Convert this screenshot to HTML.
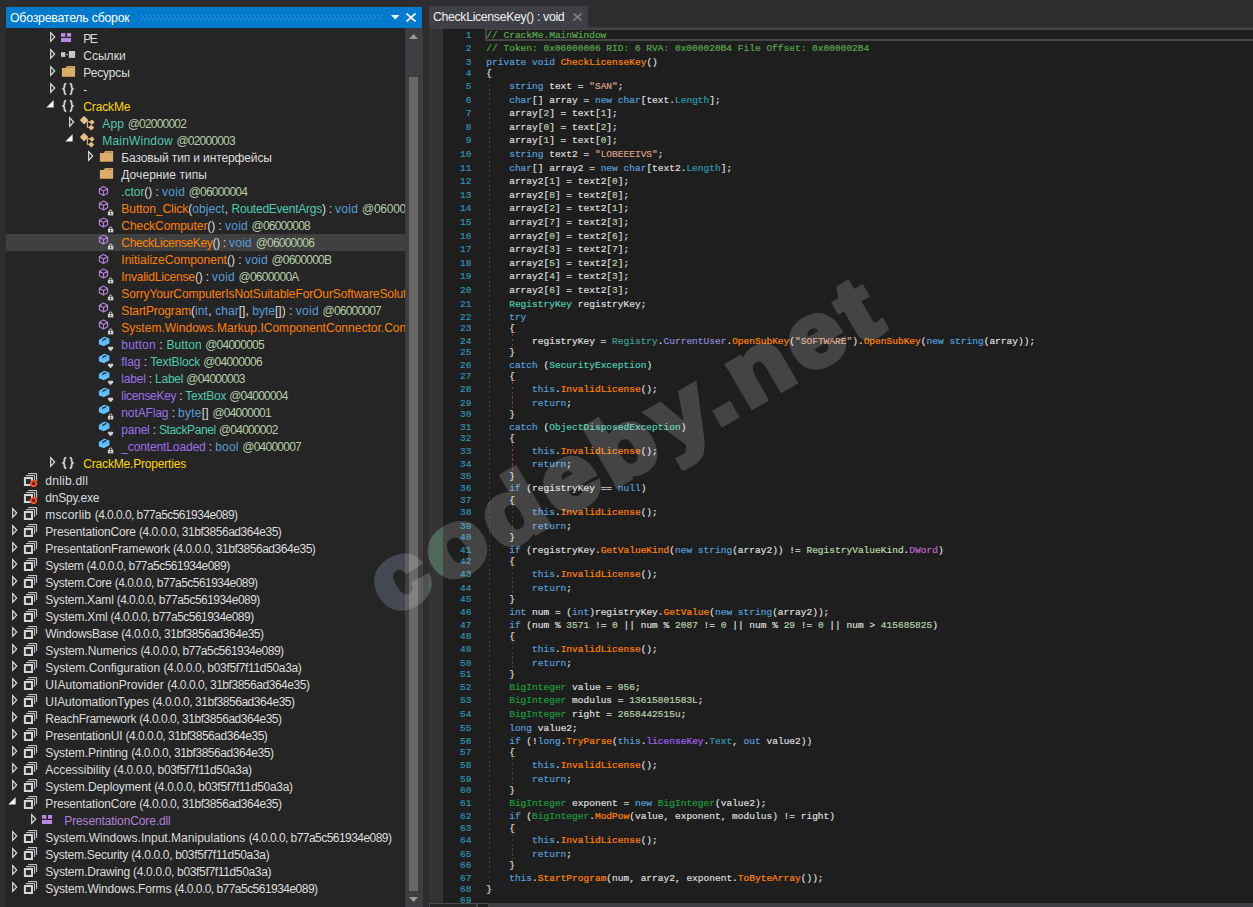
<!DOCTYPE html>
<html><head><meta charset="utf-8"><title>dnSpy</title>
<style>
html,body{margin:0;padding:0}
body{width:1253px;height:907px;overflow:hidden;background:#2d2d30;position:relative;font-family:"Liberation Sans",sans-serif;}
.abs{position:absolute}
#title{left:6px;top:7px;width:416px;height:21px;background:#007acc}
#title .tt{position:absolute;left:4px;top:4px;letter-spacing:-0.216px;font-size:12.300px;color:#fff;white-space:nowrap;line-height:15px}
#grip{position:absolute;left:135px;top:8px;width:242px;height:5px;
 background-image:radial-gradient(circle at 0.5px 0.5px,#59a8de 0.600px,transparent 0.700px),radial-gradient(circle at 0.5px 0.5px,#59a8de 0.600px,transparent 0.700px);
 background-size:4px 4px,4px 4px;background-position:0 0,2px 2px}
#tree{left:6px;top:28px;width:399px;height:879px;background:#252526;overflow:hidden}
.row{position:absolute;left:0;height:17px;width:399px;white-space:nowrap}
.row.sel{background:#404040}
.row .tx{position:absolute;top:1px;height:17px;line-height:17px;font-size:12px;white-space:pre}
.row .ic{position:absolute;top:0}
.row .ex{position:absolute}
.row svg{display:block}
#vsb{left:405px;top:28px;width:18px;height:879px;background:#3e3e42}
#vsb .th{position:absolute;left:4px;top:49px;width:9px;height:814px;background:#686868}
#tab{left:429px;top:6px;width:159px;height:21px;background:#3f3f46}
#tab .tt{position:absolute;left:4px;top:4px;letter-spacing:-0.340px;font-size:12.300px;color:#f1f1f1;white-space:nowrap;line-height:15px}
#tabline{left:429px;top:27px;width:824px;height:2px;background:#3f3f46}
#ed{left:429px;top:29px;width:824px;height:874px;background:#1e1e1e;overflow:hidden}
#gut{left:0;top:0;width:14px;height:874px;background:#333333}
.ln,.cl{position:absolute;font-family:"Liberation Mono",monospace;font-size:9.500px;line-height:12px;height:12px;white-space:pre;letter-spacing:0.015px}
.ln,.cl{-webkit-text-stroke:0.220px currentColor}
.ln{left:0;width:42.400px;text-align:right;color:#2b91af}
.cl{left:57.300px;color:#dcdcdc}
#cur{left:56px;top:0px;width:780px;height:9.000px;border:2px solid #464646;border-top-width:1.500px}
.g{position:absolute;width:1px}
#hsb{left:429px;top:903px;width:824px;height:4px;background:#3e3e42}
.wm{top:0;height:907px;overflow:hidden;pointer-events:none}
.wm span{position:absolute;top:540.800px;font-family:"Liberation Sans",sans-serif;font-weight:bold;font-size:90px;line-height:90px;color:#fff;opacity:0.190;
 -webkit-text-stroke:6px #fff;transform-origin:0 76.200px;transform:rotate(-30.150deg) scaleX(1.100);white-space:nowrap;letter-spacing:6.000px}

.Tw{color:#dcdcdc}
.Tns{color:#ffd700}
.Tt{color:#4ec9b0}
.Tk{color:#569cd6}
.Tm{color:#ff8000}
.Tf{color:#9b6fe8}
.Tn{color:#b5cea8}
.Tmod{color:#b180d7}
.Cl{color:#dcdcdc}
.Cc{color:#57a64a}
.Ck{color:#569cd6}
.Cm{color:#ff8000}
.Ct{color:#4ec9b0}
.Cst{color:#3f9f90}
.Csp{color:#8a8ad8}
.Cip{color:#2a9aae}
.Cf{color:#a060f0}
.Cs{color:#d69d85}
.Cn{color:#b5cea8}
.Cvt{color:#1a9c3c}
.Ce{color:#b8d7a3}
.Cef{color:#bd63c5}
</style></head><body>
<div id="title" class="abs"><div class="tt">Обозреватель сборок</div><div id="grip"></div>
<svg class="abs" style="left:385px;top:8px" width="9" height="5" viewBox="0 0 9 5"><path d="M0 0h8.500l-4.250 4.500z" fill="#fff"/></svg>
<svg class="abs" style="left:400px;top:6px" width="10" height="9" viewBox="0 0 10 9"><path d="M.5 .5l9 8M9.500 .5l-9 8" stroke="#fff" stroke-width="1.600"/></svg>
</div>
<div id="tree" class="abs">
<div class="row" style="top:2px">
<span class="ex" style="left:43.2px;top:1.200px"><svg width="8" height="12" viewBox="0 0 8 12"><path d="M1.700 1.700l4 4.300-4 4.300z" fill="none" stroke="#e4e4e4" stroke-width="1.150"/></svg></span>
<span class="ic" style="left:54px;top:0px"><svg width="22" height="17" viewBox="0 0 22 17" style="overflow:visible"><rect x="1" y="3" width="4.400" height="3.800" fill="#b888e0"/><rect x="7" y="3" width="4.100" height="3.800" fill="#b888e0"/><rect x="1" y="8" width="10.100" height="4" fill="#b888e0"/></svg></span>
<span class="tx" id="r0_0" style="left:77.3px;letter-spacing:-1.600px"><span class="Tw">PE</span></span>
</div>
<div class="row" style="top:19px">
<span class="ex" style="left:43.2px;top:1.200px"><svg width="8" height="12" viewBox="0 0 8 12"><path d="M1.700 1.700l4 4.300-4 4.300z" fill="none" stroke="#e4e4e4" stroke-width="1.150"/></svg></span>
<span class="ic" style="left:54px;top:0px"><svg width="22" height="17" viewBox="0 0 22 17" style="overflow:visible"><rect x="1" y="5.200" width="4.300" height="4.700" fill="#c8c8c8"/><rect x="6.200" y="7.100" width="1.700" height="1" fill="#c8c8c8"/><rect x="8.900" y="4" width="6.200" height="6.900" fill="#c8c8c8"/></svg></span>
<span class="tx" id="r1_0" style="left:77.3px;letter-spacing:0.009px"><span class="Tw">Ссылки</span></span>
</div>
<div class="row" style="top:36px">
<span class="ex" style="left:43.2px;top:1.200px"><svg width="8" height="12" viewBox="0 0 8 12"><path d="M1.700 1.700l4 4.300-4 4.300z" fill="none" stroke="#e4e4e4" stroke-width="1.150"/></svg></span>
<span class="ic" style="left:54px;top:0px"><svg width="22" height="17" viewBox="0 0 22 17" style="overflow:visible"><path d="M1.900 3.900h3.600l1.600-2h8v10.900h-13.200z" fill="#dcac6c"/><path d="M7.400 3.250h6.600" stroke="#8f6f42" stroke-width="0.700"/></svg></span>
<span class="tx" id="r2_0" style="left:77.3px;letter-spacing:-0.132px"><span class="Tw">Ресурсы</span></span>
</div>
<div class="row" style="top:53px">
<span class="ex" style="left:43.2px;top:1.200px"><svg width="8" height="12" viewBox="0 0 8 12"><path d="M1.700 1.700l4 4.300-4 4.300z" fill="none" stroke="#e4e4e4" stroke-width="1.150"/></svg></span>
<span class="ic" style="left:54px;top:0px"><svg width="22" height="17" viewBox="0 0 22 17" style="overflow:visible"><path d="M6.300 2.600c-1.700 0-1.800 .6-1.800 2.200 0 1.700-.2 2.600-1.100 3.100 .9 .5 1.100 1.400 1.100 3.100 0 1.600 .1 2.200 1.800 2.200M9.700 2.600c1.700 0 1.800 .6 1.800 2.200 0 1.700 .2 2.600 1.100 3.100-.9 .5-1.100 1.400-1.100 3.100 0 1.600-.1 2.200-1.800 2.200" fill="none" stroke="#d0d0d0" stroke-width="1.900"/></svg></span>
<span class="tx" id="r3_0" style="left:77.3px;letter-spacing:-0.255px"><span class="Tw">-</span></span>
</div>
<div class="row" style="top:70px">
<span class="ex" style="left:40.0px;top:2.000px"><svg width="8" height="8" viewBox="0 0 8 8"><path d="M7.600 .3v7.300h-7.300z" fill="#f4f4f4"/></svg></span>
<span class="ic" style="left:54px;top:0px"><svg width="22" height="17" viewBox="0 0 22 17" style="overflow:visible"><path d="M6.300 2.600c-1.700 0-1.800 .6-1.800 2.200 0 1.700-.2 2.600-1.100 3.100 .9 .5 1.100 1.400 1.100 3.100 0 1.600 .1 2.200 1.800 2.200M9.700 2.600c1.700 0 1.800 .6 1.800 2.200 0 1.700 .2 2.600 1.100 3.100-.9 .5-1.100 1.400-1.100 3.100 0 1.600-.1 2.200-1.800 2.200" fill="none" stroke="#d0d0d0" stroke-width="1.900"/></svg></span>
<span class="tx" id="r4_0" style="left:77.3px;letter-spacing:-0.130px"><span class="Tns">CrackMe</span></span>
</div>
<div class="row" style="top:87px">
<span class="ex" style="left:62.2px;top:1.200px"><svg width="8" height="12" viewBox="0 0 8 12"><path d="M1.700 1.700l4 4.300-4 4.300z" fill="none" stroke="#e4e4e4" stroke-width="1.150"/></svg></span>
<span class="ic" style="left:73px;top:0px"><svg width="22" height="17" viewBox="0 0 22 17" style="overflow:visible"><rect x="1.99" y="1.99" width="6.22" height="6.22" rx="1.0" transform="rotate(45 5.10 5.10)" fill="#e5bd85"/><rect x="10.99" y="5.29" width="3.82" height="3.82" rx="0.5" transform="rotate(45 12.90 7.20)" fill="#e5bd85"/><rect x="10.25" y="10.55" width="4.10" height="4.10" rx="0.5" transform="rotate(45 12.30 12.60)" fill="#e5bd85"/><path d="M7.500 6.700h3.500M8.400 7v5.200h2.500" fill="none" stroke="#e5bd85" stroke-width="1.100"/></svg></span>
<span class="tx" id="r5_0" style="left:96.3px;letter-spacing:0.179px"><span class="Tt">App </span></span>
<span class="tx" id="r5_1" style="left:121.7px;letter-spacing:-0.800px"><span class="Tn">@02000002</span></span>
</div>
<div class="row" style="top:104px">
<span class="ex" style="left:59.0px;top:2.000px"><svg width="8" height="8" viewBox="0 0 8 8"><path d="M7.600 .3v7.300h-7.300z" fill="#f4f4f4"/></svg></span>
<span class="ic" style="left:73px;top:0px"><svg width="22" height="17" viewBox="0 0 22 17" style="overflow:visible"><rect x="1.99" y="1.99" width="6.22" height="6.22" rx="1.0" transform="rotate(45 5.10 5.10)" fill="#e5bd85"/><rect x="10.99" y="5.29" width="3.82" height="3.82" rx="0.5" transform="rotate(45 12.90 7.20)" fill="#e5bd85"/><rect x="10.25" y="10.55" width="4.10" height="4.10" rx="0.5" transform="rotate(45 12.30 12.60)" fill="#e5bd85"/><path d="M7.500 6.700h3.500M8.400 7v5.200h2.500" fill="none" stroke="#e5bd85" stroke-width="1.100"/></svg></span>
<span class="tx" id="r6_0" style="left:96.3px;letter-spacing:0.188px"><span class="Tt">MainWindow </span></span>
<span class="tx" id="r6_1" style="left:170.4px;letter-spacing:-0.800px"><span class="Tn">@02000003</span></span>
</div>
<div class="row" style="top:121px">
<span class="ex" style="left:81.2px;top:1.200px"><svg width="8" height="12" viewBox="0 0 8 12"><path d="M1.700 1.700l4 4.300-4 4.300z" fill="none" stroke="#e4e4e4" stroke-width="1.150"/></svg></span>
<span class="ic" style="left:92px;top:0px"><svg width="22" height="17" viewBox="0 0 22 17" style="overflow:visible"><path d="M1.900 3.900h3.600l1.600-2h8v10.900h-13.200z" fill="#dcac6c"/><path d="M7.400 3.250h6.600" stroke="#8f6f42" stroke-width="0.700"/></svg></span>
<span class="tx" id="r7_0" style="left:115.3px;letter-spacing:-0.124px"><span class="Tw">Базовый тип и интерфейсы</span></span>
</div>
<div class="row" style="top:138px">
<span class="ic" style="left:92px;top:0px"><svg width="22" height="17" viewBox="0 0 22 17" style="overflow:visible"><path d="M1.900 3.900h3.600l1.600-2h8v10.900h-13.200z" fill="#dcac6c"/><path d="M7.400 3.250h6.600" stroke="#8f6f42" stroke-width="0.700"/></svg></span>
<span class="tx" id="r8_0" style="left:115.3px;letter-spacing:0.059px"><span class="Tw">Дочерние типы</span></span>
</div>
<div class="row" style="top:155px">
<span class="ic" style="left:92px;top:0px"><svg width="22" height="17" viewBox="0 0 22 17" style="overflow:visible"><g transform="translate(0 2.3)"><path d="M5.500 1.100l4.100 2.250v4.500l-4.100 2.250-4.100-2.250v-4.500z M1.400 3.350l4.100 2.250 4.100-2.250M5.500 5.600v4.500" fill="none" stroke="#b180d7" stroke-width="1.150" stroke-linejoin="round"/></g></svg></span>
<span class="tx" id="r9_0" style="left:115.3px;letter-spacing:-0.064px"><span class="Tt">.ctor</span><span class="Tw">() : </span></span>
<span class="tx" id="r9_1" style="left:156.0px;letter-spacing:0.268px"><span class="Tk">void </span></span>
<span class="tx" id="r9_2" style="left:182.7px;letter-spacing:-0.800px"><span class="Tn">@06000004</span></span>
</div>
<div class="row" style="top:172px">
<span class="ic" style="left:92px;top:0px"><svg width="22" height="17" viewBox="0 0 22 17" style="overflow:visible"><g transform="translate(0 0.0)"><path d="M5.500 1.100l4.100 2.250v4.500l-4.100 2.250-4.100-2.250v-4.500z M1.400 3.350l4.100 2.250 4.100-2.250M5.500 5.600v4.500" fill="none" stroke="#b180d7" stroke-width="1.150" stroke-linejoin="round"/></g><g><rect x="9.900" y="11.800" width="5.400" height="3.600" fill="#d0d0d0"/><path d="M11.300 11.800v-.6a1.300 1.300 0 0 1 2.600 0v.6" fill="none" stroke="#d0d0d0" stroke-width="1"/><rect x="12.100" y="12.800" width="1" height="1.500" fill="#252526"/></g></svg></span>
<span class="tx" id="r10_0" style="left:115.3px;letter-spacing:-0.036px"><span class="Tm">Button_Click</span><span class="Tw">(</span></span>
<span class="tx" id="r10_1" style="left:186.2px;letter-spacing:0.089px"><span class="Tk">object</span><span class="Tw">, </span></span>
<span class="tx" id="r10_2" style="left:225.6px;letter-spacing:-0.245px"><span class="Tt">RoutedEventArgs</span><span class="Tw">) : </span></span>
<span class="tx" id="r10_3" style="left:329.0px;letter-spacing:0.328px"><span class="Tk">void </span></span>
<span class="tx" id="r10_4" style="left:356.0px;letter-spacing:-0.255px"><span class="Tn">@06000009</span></span>
</div>
<div class="row" style="top:189px">
<span class="ic" style="left:92px;top:0px"><svg width="22" height="17" viewBox="0 0 22 17" style="overflow:visible"><g transform="translate(0 0.0)"><path d="M5.500 1.100l4.100 2.250v4.500l-4.100 2.250-4.100-2.250v-4.500z M1.400 3.350l4.100 2.250 4.100-2.250M5.500 5.600v4.500" fill="none" stroke="#b180d7" stroke-width="1.150" stroke-linejoin="round"/></g><g><rect x="9.900" y="11.800" width="5.400" height="3.600" fill="#d0d0d0"/><path d="M11.300 11.800v-.6a1.300 1.300 0 0 1 2.600 0v.6" fill="none" stroke="#d0d0d0" stroke-width="1"/><rect x="12.100" y="12.800" width="1" height="1.500" fill="#252526"/></g></svg></span>
<span class="tx" id="r11_0" style="left:115.3px;letter-spacing:-0.050px"><span class="Tm">CheckComputer</span><span class="Tw">() : </span></span>
<span class="tx" id="r11_1" style="left:219.1px;letter-spacing:0.209px"><span class="Tk">void </span></span>
<span class="tx" id="r11_2" style="left:245.5px;letter-spacing:-0.798px"><span class="Tn">@06000008</span></span>
</div>
<div class="row sel" style="top:206px">
<span class="ic" style="left:92px;top:0px"><svg width="22" height="17" viewBox="0 0 22 17" style="overflow:visible"><g transform="translate(0 0.0)"><path d="M5.500 1.100l4.100 2.250v4.500l-4.100 2.250-4.100-2.250v-4.500z M1.400 3.350l4.100 2.250 4.100-2.250M5.500 5.600v4.500" fill="none" stroke="#b180d7" stroke-width="1.150" stroke-linejoin="round"/></g><g><rect x="9.900" y="11.800" width="5.400" height="3.600" fill="#d0d0d0"/><path d="M11.300 11.800v-.6a1.300 1.300 0 0 1 2.600 0v.6" fill="none" stroke="#d0d0d0" stroke-width="1"/><rect x="12.100" y="12.800" width="1" height="1.500" fill="#252526"/></g></svg></span>
<span class="tx" id="r12_0" style="left:115.3px;letter-spacing:-0.323px"><span class="Tm">CheckLicenseKey</span><span class="Tw">() : </span></span>
<span class="tx" id="r12_1" style="left:222.9px;letter-spacing:0.290px"><span class="Tk">void </span></span>
<span class="tx" id="r12_2" style="left:249.7px;letter-spacing:-0.800px"><span class="Tn">@06000006</span></span>
</div>
<div class="row" style="top:223px">
<span class="ic" style="left:92px;top:0px"><svg width="22" height="17" viewBox="0 0 22 17" style="overflow:visible"><g transform="translate(0 2.3)"><path d="M5.500 1.100l4.100 2.250v4.500l-4.100 2.250-4.100-2.250v-4.500z M1.400 3.350l4.100 2.250 4.100-2.250M5.500 5.600v4.500" fill="none" stroke="#b180d7" stroke-width="1.150" stroke-linejoin="round"/></g></svg></span>
<span class="tx" id="r13_0" style="left:115.3px;letter-spacing:0.012px"><span class="Tm">InitializeComponent</span><span class="Tw">() : </span></span>
<span class="tx" id="r13_1" style="left:239.0px;letter-spacing:0.208px"><span class="Tk">void </span></span>
<span class="tx" id="r13_2" style="left:265.4px;letter-spacing:-0.800px"><span class="Tn">@0600000B</span></span>
</div>
<div class="row" style="top:240px">
<span class="ic" style="left:92px;top:0px"><svg width="22" height="17" viewBox="0 0 22 17" style="overflow:visible"><g transform="translate(0 0.0)"><path d="M5.500 1.100l4.100 2.250v4.500l-4.100 2.250-4.100-2.250v-4.500z M1.400 3.350l4.100 2.250 4.100-2.250M5.500 5.600v4.500" fill="none" stroke="#b180d7" stroke-width="1.150" stroke-linejoin="round"/></g><g><rect x="9.900" y="11.800" width="5.400" height="3.600" fill="#d0d0d0"/><path d="M11.300 11.800v-.6a1.300 1.300 0 0 1 2.600 0v.6" fill="none" stroke="#d0d0d0" stroke-width="1"/><rect x="12.100" y="12.800" width="1" height="1.500" fill="#252526"/></g></svg></span>
<span class="tx" id="r14_0" style="left:115.3px;letter-spacing:-0.177px"><span class="Tm">InvalidLicense</span><span class="Tw">() : </span></span>
<span class="tx" id="r14_1" style="left:206.0px;letter-spacing:0.228px"><span class="Tk">void </span></span>
<span class="tx" id="r14_2" style="left:232.5px;letter-spacing:-0.756px"><span class="Tn">@0600000A</span></span>
</div>
<div class="row" style="top:257px">
<span class="ic" style="left:92px;top:0px"><svg width="22" height="17" viewBox="0 0 22 17" style="overflow:visible"><g transform="translate(0 0.0)"><path d="M5.500 1.100l4.100 2.250v4.500l-4.100 2.250-4.100-2.250v-4.500z M1.400 3.350l4.100 2.250 4.100-2.250M5.500 5.600v4.500" fill="none" stroke="#b180d7" stroke-width="1.150" stroke-linejoin="round"/></g><g><rect x="9.900" y="11.800" width="5.400" height="3.600" fill="#d0d0d0"/><path d="M11.300 11.800v-.6a1.300 1.300 0 0 1 2.600 0v.6" fill="none" stroke="#d0d0d0" stroke-width="1"/><rect x="12.100" y="12.800" width="1" height="1.500" fill="#252526"/></g></svg></span>
<span class="tx" id="r15_0" style="left:115.3px;letter-spacing:-0.096px"><span class="Tm">SorryYourComputerIsNotSuitableForOurSoftwareSolution</span></span>
<span class="tx" id="r15_1" style="left:416.0px;letter-spacing:-0.255px"><span class="Tw">() : </span><span class="Tk">void </span><span class="Tn">@06000005</span></span>
</div>
<div class="row" style="top:274px">
<span class="ic" style="left:92px;top:0px"><svg width="22" height="17" viewBox="0 0 22 17" style="overflow:visible"><g transform="translate(0 0.0)"><path d="M5.500 1.100l4.100 2.250v4.500l-4.100 2.250-4.100-2.250v-4.500z M1.400 3.350l4.100 2.250 4.100-2.250M5.500 5.600v4.500" fill="none" stroke="#b180d7" stroke-width="1.150" stroke-linejoin="round"/></g><g><rect x="9.900" y="11.800" width="5.400" height="3.600" fill="#d0d0d0"/><path d="M11.300 11.800v-.6a1.300 1.300 0 0 1 2.600 0v.6" fill="none" stroke="#d0d0d0" stroke-width="1"/><rect x="12.100" y="12.800" width="1" height="1.500" fill="#252526"/></g></svg></span>
<span class="tx" id="r16_0" style="left:115.3px;letter-spacing:-0.135px"><span class="Tm">StartProgram</span><span class="Tw">(</span></span>
<span class="tx" id="r16_1" style="left:188.9px;letter-spacing:0.190px"><span class="Tk">int</span><span class="Tw">, </span></span>
<span class="tx" id="r16_2" style="left:209.2px;letter-spacing:0.041px"><span class="Tk">char</span><span class="Tw">[], </span></span>
<span class="tx" id="r16_3" style="left:246.2px;letter-spacing:0.025px"><span class="Tk">byte</span><span class="Tw">[]) : </span></span>
<span class="tx" id="r16_4" style="left:289.8px;letter-spacing:0.289px"><span class="Tk">void </span></span>
<span class="tx" id="r16_5" style="left:316.6px;letter-spacing:-0.797px"><span class="Tn">@06000007</span></span>
</div>
<div class="row" style="top:291px">
<span class="ic" style="left:92px;top:0px"><svg width="22" height="17" viewBox="0 0 22 17" style="overflow:visible"><g transform="translate(0 0.0)"><path d="M5.500 1.100l4.100 2.250v4.500l-4.100 2.250-4.100-2.250v-4.500z M1.400 3.350l4.100 2.250 4.100-2.250M5.500 5.600v4.500" fill="none" stroke="#b180d7" stroke-width="1.150" stroke-linejoin="round"/></g><g><rect x="9.900" y="11.800" width="5.400" height="3.600" fill="#d0d0d0"/><path d="M11.300 11.800v-.6a1.300 1.300 0 0 1 2.600 0v.6" fill="none" stroke="#d0d0d0" stroke-width="1"/><rect x="12.100" y="12.800" width="1" height="1.500" fill="#252526"/></g></svg></span>
<span class="tx" id="r17_0" style="left:115.3px;letter-spacing:0.018px"><span class="Tm">System.Windows.Markup.IComponentConnector.Connect</span></span>
<span class="tx" id="r17_1" style="left:423.0px;letter-spacing:-0.255px"><span class="Tw">(</span><span class="Tk">int</span><span class="Tw">, </span><span class="Tk">object</span><span class="Tw">) : </span><span class="Tk">void </span><span class="Tn">@0600000C</span></span>
</div>
<div class="row" style="top:308px">
<span class="ic" style="left:92px;top:0px"><svg width="22" height="17" viewBox="0 0 22 17" style="overflow:visible"><path d="M1.500 4.300l5-2.900 4.300 1.700v3.900l-5 2.500-4.300-1.700z" fill="#66c1fb" stroke="#66c1fb" stroke-width="1.300" stroke-linejoin="round"/><path d="M1.300 4.500l4.400 1.800 5.300-3" fill="none" stroke="#4aa5e0" stroke-width="0.600"/><path d="M4.900 4.200l2.900-1.500" stroke="#122a40" stroke-width="1.300" stroke-linecap="round"/><path d="M12.600 15.300l-2.500-2.600a1.400 1.400 0 0 1 2.500-1.500a1.400 1.400 0 0 1 2.500 1.500z" fill="#d0d0d0"/></svg></span>
<span class="tx" id="r18_0" style="left:115.3px;letter-spacing:0.190px"><span class="Tf">button</span><span class="Tw"> : </span></span>
<span class="tx" id="r18_1" style="left:160.4px;letter-spacing:0.111px"><span class="Tt">Button </span></span>
<span class="tx" id="r18_2" style="left:199.2px;letter-spacing:-0.763px"><span class="Tn">@04000005</span></span>
</div>
<div class="row" style="top:325px">
<span class="ic" style="left:92px;top:0px"><svg width="22" height="17" viewBox="0 0 22 17" style="overflow:visible"><path d="M1.500 4.300l5-2.900 4.300 1.700v3.900l-5 2.500-4.300-1.700z" fill="#66c1fb" stroke="#66c1fb" stroke-width="1.300" stroke-linejoin="round"/><path d="M1.300 4.500l4.400 1.800 5.300-3" fill="none" stroke="#4aa5e0" stroke-width="0.600"/><path d="M4.900 4.200l2.900-1.500" stroke="#122a40" stroke-width="1.300" stroke-linecap="round"/><path d="M12.600 15.300l-2.500-2.600a1.400 1.400 0 0 1 2.500-1.500a1.400 1.400 0 0 1 2.500 1.500z" fill="#d0d0d0"/></svg></span>
<span class="tx" id="r19_0" style="left:115.3px;letter-spacing:-0.053px"><span class="Tf">flag</span><span class="Tw"> : </span></span>
<span class="tx" id="r19_1" style="left:144.3px;letter-spacing:-0.178px"><span class="Tt">TextBlock </span></span>
<span class="tx" id="r19_2" style="left:197.2px;letter-spacing:-0.774px"><span class="Tn">@04000006</span></span>
</div>
<div class="row" style="top:342px">
<span class="ic" style="left:92px;top:0px"><svg width="22" height="17" viewBox="0 0 22 17" style="overflow:visible"><path d="M1.500 4.300l5-2.900 4.300 1.700v3.900l-5 2.500-4.300-1.700z" fill="#66c1fb" stroke="#66c1fb" stroke-width="1.300" stroke-linejoin="round"/><path d="M1.300 4.500l4.400 1.800 5.300-3" fill="none" stroke="#4aa5e0" stroke-width="0.600"/><path d="M4.900 4.200l2.900-1.500" stroke="#122a40" stroke-width="1.300" stroke-linecap="round"/><path d="M12.600 15.300l-2.500-2.600a1.400 1.400 0 0 1 2.500-1.500a1.400 1.400 0 0 1 2.500 1.500z" fill="#d0d0d0"/></svg></span>
<span class="tx" id="r20_0" style="left:115.3px;letter-spacing:-0.196px"><span class="Tf">label</span><span class="Tw"> : </span></span>
<span class="tx" id="r20_1" style="left:149.1px;letter-spacing:-0.249px"><span class="Tt">Label </span></span>
<span class="tx" id="r20_2" style="left:180.3px;letter-spacing:-0.797px"><span class="Tn">@04000003</span></span>
</div>
<div class="row" style="top:359px">
<span class="ic" style="left:92px;top:0px"><svg width="22" height="17" viewBox="0 0 22 17" style="overflow:visible"><path d="M1.500 4.300l5-2.900 4.300 1.700v3.900l-5 2.500-4.300-1.700z" fill="#66c1fb" stroke="#66c1fb" stroke-width="1.300" stroke-linejoin="round"/><path d="M1.300 4.500l4.400 1.800 5.300-3" fill="none" stroke="#4aa5e0" stroke-width="0.600"/><path d="M4.900 4.200l2.900-1.500" stroke="#122a40" stroke-width="1.300" stroke-linecap="round"/><path d="M12.600 15.300l-2.500-2.600a1.400 1.400 0 0 1 2.500-1.500a1.400 1.400 0 0 1 2.500 1.500z" fill="#d0d0d0"/></svg></span>
<span class="tx" id="r21_0" style="left:115.3px;letter-spacing:-0.311px"><span class="Tf">licenseKey</span><span class="Tw"> : </span></span>
<span class="tx" id="r21_1" style="left:179.3px;letter-spacing:-0.266px"><span class="Tt">TextBox </span></span>
<span class="tx" id="r21_2" style="left:223.2px;letter-spacing:-0.796px"><span class="Tn">@04000004</span></span>
</div>
<div class="row" style="top:376px">
<span class="ic" style="left:92px;top:0px"><svg width="22" height="17" viewBox="0 0 22 17" style="overflow:visible"><path d="M1.500 4.300l5-2.900 4.300 1.700v3.900l-5 2.500-4.300-1.700z" fill="#66c1fb" stroke="#66c1fb" stroke-width="1.300" stroke-linejoin="round"/><path d="M1.300 4.500l4.400 1.800 5.300-3" fill="none" stroke="#4aa5e0" stroke-width="0.600"/><path d="M4.900 4.200l2.900-1.500" stroke="#122a40" stroke-width="1.300" stroke-linecap="round"/><g><rect x="9.900" y="11.800" width="5.400" height="3.600" fill="#d0d0d0"/><path d="M11.300 11.800v-.6a1.300 1.300 0 0 1 2.600 0v.6" fill="none" stroke="#d0d0d0" stroke-width="1"/><rect x="12.100" y="12.800" width="1" height="1.500" fill="#252526"/></g></svg></span>
<span class="tx" id="r22_0" style="left:115.3px;letter-spacing:-0.113px"><span class="Tf">notAFlag</span><span class="Tw"> : </span></span>
<span class="tx" id="r22_1" style="left:172.1px;letter-spacing:0.229px"><span class="Tk">byte</span><span class="Tw">[] </span></span>
<span class="tx" id="r22_2" style="left:206.4px;letter-spacing:-0.800px"><span class="Tn">@04000001</span></span>
</div>
<div class="row" style="top:393px">
<span class="ic" style="left:92px;top:0px"><svg width="22" height="17" viewBox="0 0 22 17" style="overflow:visible"><path d="M1.500 4.300l5-2.900 4.300 1.700v3.900l-5 2.500-4.300-1.700z" fill="#66c1fb" stroke="#66c1fb" stroke-width="1.300" stroke-linejoin="round"/><path d="M1.300 4.500l4.400 1.800 5.300-3" fill="none" stroke="#4aa5e0" stroke-width="0.600"/><path d="M4.900 4.200l2.900-1.500" stroke="#122a40" stroke-width="1.300" stroke-linecap="round"/><path d="M12.600 15.300l-2.500-2.600a1.400 1.400 0 0 1 2.500-1.500a1.400 1.400 0 0 1 2.500 1.500z" fill="#d0d0d0"/></svg></span>
<span class="tx" id="r23_0" style="left:115.3px;letter-spacing:-0.223px"><span class="Tf">panel</span><span class="Tw"> : </span></span>
<span class="tx" id="r23_1" style="left:152.9px;letter-spacing:-0.367px"><span class="Tt">StackPanel </span></span>
<span class="tx" id="r23_2" style="left:212.9px;letter-spacing:-0.763px"><span class="Tn">@04000002</span></span>
</div>
<div class="row" style="top:410px">
<span class="ic" style="left:92px;top:0px"><svg width="22" height="17" viewBox="0 0 22 17" style="overflow:visible"><path d="M1.500 4.300l5-2.900 4.300 1.700v3.900l-5 2.500-4.300-1.700z" fill="#66c1fb" stroke="#66c1fb" stroke-width="1.300" stroke-linejoin="round"/><path d="M1.300 4.500l4.400 1.800 5.300-3" fill="none" stroke="#4aa5e0" stroke-width="0.600"/><path d="M4.900 4.200l2.900-1.500" stroke="#122a40" stroke-width="1.300" stroke-linecap="round"/><g><rect x="9.900" y="11.800" width="5.400" height="3.600" fill="#d0d0d0"/><path d="M11.300 11.800v-.6a1.300 1.300 0 0 1 2.600 0v.6" fill="none" stroke="#d0d0d0" stroke-width="1"/><rect x="12.100" y="12.800" width="1" height="1.500" fill="#252526"/></g></svg></span>
<span class="tx" id="r24_0" style="left:115.3px;letter-spacing:-0.130px"><span class="Tf">_contentLoaded</span><span class="Tw"> : </span></span>
<span class="tx" id="r24_1" style="left:209.2px;letter-spacing:0.216px"><span class="Tk">bool </span></span>
<span class="tx" id="r24_2" style="left:236.3px;letter-spacing:-0.764px"><span class="Tn">@04000007</span></span>
</div>
<div class="row" style="top:427px">
<span class="ex" style="left:43.2px;top:1.200px"><svg width="8" height="12" viewBox="0 0 8 12"><path d="M1.700 1.700l4 4.300-4 4.300z" fill="none" stroke="#e4e4e4" stroke-width="1.150"/></svg></span>
<span class="ic" style="left:54px;top:0px"><svg width="22" height="17" viewBox="0 0 22 17" style="overflow:visible"><path d="M6.300 2.600c-1.700 0-1.800 .6-1.800 2.200 0 1.700-.2 2.600-1.100 3.100 .9 .5 1.100 1.400 1.100 3.100 0 1.600 .1 2.200 1.800 2.200M9.700 2.600c1.700 0 1.800 .6 1.800 2.200 0 1.700 .2 2.600 1.100 3.100-.9 .5-1.100 1.400-1.100 3.100 0 1.600-.1 2.200-1.800 2.200" fill="none" stroke="#d0d0d0" stroke-width="1.900"/></svg></span>
<span class="tx" id="r25_0" style="left:77.3px;letter-spacing:-0.185px"><span class="Tns">CrackMe.Properties</span></span>
</div>
<div class="row" style="top:444px">
<span class="ic" style="left:16px;top:0px"><svg width="22" height="17" viewBox="0 0 22 17" style="overflow:visible"><path d="M6.100 1.600h8.500v7.300" fill="none" stroke="#d6d6d6" stroke-width="1"/><path d="M4 3.600h8.600v7.300" fill="none" stroke="#d6d6d6" stroke-width="1"/><rect x="2.900" y="6" width="7.100" height="7" fill="#2a2a2d" stroke="#d6d6d6" stroke-width="2"/><path d="M10.100 7.900h3l2.100 2.100v3l-2.100 2.100h-3l-2.100-2.100v-3z" fill="#f4511e"/><path d="M10.300 10.200l2.600 2.600M12.900 10.200l-2.600 2.600" stroke="#3a1408" stroke-width="1.100"/></svg></span>
<span class="tx" id="r26_0" style="left:39.3px;letter-spacing:0.244px"><span class="Tw">dnlib.dll</span></span>
</div>
<div class="row" style="top:461px">
<span class="ic" style="left:16px;top:0px"><svg width="22" height="17" viewBox="0 0 22 17" style="overflow:visible"><path d="M6.100 1.600h8.500v7.300" fill="none" stroke="#d6d6d6" stroke-width="1"/><path d="M4 3.600h8.600v7.300" fill="none" stroke="#d6d6d6" stroke-width="1"/><rect x="2.900" y="6" width="7.100" height="7" fill="#2a2a2d" stroke="#d6d6d6" stroke-width="2"/><path d="M10.100 7.900h3l2.100 2.100v3l-2.100 2.100h-3l-2.100-2.100v-3z" fill="#f4511e"/><path d="M10.300 10.200l2.600 2.600M12.900 10.200l-2.600 2.600" stroke="#3a1408" stroke-width="1.100"/></svg></span>
<span class="tx" id="r27_0" style="left:39.3px;letter-spacing:-0.214px"><span class="Tw">dnSpy.exe</span></span>
</div>
<div class="row" style="top:478px">
<span class="ex" style="left:5.2px;top:1.200px"><svg width="8" height="12" viewBox="0 0 8 12"><path d="M1.700 1.700l4 4.300-4 4.300z" fill="none" stroke="#e4e4e4" stroke-width="1.150"/></svg></span>
<span class="ic" style="left:16px;top:0px"><svg width="22" height="17" viewBox="0 0 22 17" style="overflow:visible"><path d="M6.100 1.600h8.500v7.300" fill="none" stroke="#d6d6d6" stroke-width="1"/><path d="M4 3.600h8.600v7.300" fill="none" stroke="#d6d6d6" stroke-width="1"/><rect x="2.900" y="6" width="7.100" height="7" fill="#2a2a2d" stroke="#d6d6d6" stroke-width="2"/></svg></span>
<span class="tx" id="r28_0" style="left:39.3px;letter-spacing:0.154px"><span class="Tw">mscorlib </span></span>
<span class="tx" id="r28_1" style="left:88.7px;letter-spacing:-0.543px"><span class="Tw">(4.0.0.0, b77a5c561934e089)</span></span>
</div>
<div class="row" style="top:495px">
<span class="ex" style="left:5.2px;top:1.200px"><svg width="8" height="12" viewBox="0 0 8 12"><path d="M1.700 1.700l4 4.300-4 4.300z" fill="none" stroke="#e4e4e4" stroke-width="1.150"/></svg></span>
<span class="ic" style="left:16px;top:0px"><svg width="22" height="17" viewBox="0 0 22 17" style="overflow:visible"><path d="M6.100 1.600h8.500v7.300" fill="none" stroke="#d6d6d6" stroke-width="1"/><path d="M4 3.600h8.600v7.300" fill="none" stroke="#d6d6d6" stroke-width="1"/><rect x="2.900" y="6" width="7.100" height="7" fill="#2a2a2d" stroke="#d6d6d6" stroke-width="2"/></svg></span>
<span class="tx" id="r29_0" style="left:39.3px;letter-spacing:-0.178px"><span class="Tw">PresentationCore </span></span>
<span class="tx" id="r29_1" style="left:133.0px;letter-spacing:-0.460px"><span class="Tw">(4.0.0.0, 31bf3856ad364e35)</span></span>
</div>
<div class="row" style="top:512px">
<span class="ex" style="left:5.2px;top:1.200px"><svg width="8" height="12" viewBox="0 0 8 12"><path d="M1.700 1.700l4 4.300-4 4.300z" fill="none" stroke="#e4e4e4" stroke-width="1.150"/></svg></span>
<span class="ic" style="left:16px;top:0px"><svg width="22" height="17" viewBox="0 0 22 17" style="overflow:visible"><path d="M6.100 1.600h8.500v7.300" fill="none" stroke="#d6d6d6" stroke-width="1"/><path d="M4 3.600h8.600v7.300" fill="none" stroke="#d6d6d6" stroke-width="1"/><rect x="2.900" y="6" width="7.100" height="7" fill="#2a2a2d" stroke="#d6d6d6" stroke-width="2"/></svg></span>
<span class="tx" id="r30_0" style="left:39.3px;letter-spacing:-0.137px"><span class="Tw">PresentationFramework </span></span>
<span class="tx" id="r30_1" style="left:167.0px;letter-spacing:-0.460px"><span class="Tw">(4.0.0.0, 31bf3856ad364e35)</span></span>
</div>
<div class="row" style="top:529px">
<span class="ex" style="left:5.2px;top:1.200px"><svg width="8" height="12" viewBox="0 0 8 12"><path d="M1.700 1.700l4 4.300-4 4.300z" fill="none" stroke="#e4e4e4" stroke-width="1.150"/></svg></span>
<span class="ic" style="left:16px;top:0px"><svg width="22" height="17" viewBox="0 0 22 17" style="overflow:visible"><path d="M6.100 1.600h8.500v7.300" fill="none" stroke="#d6d6d6" stroke-width="1"/><path d="M4 3.600h8.600v7.300" fill="none" stroke="#d6d6d6" stroke-width="1"/><rect x="2.900" y="6" width="7.100" height="7" fill="#2a2a2d" stroke="#d6d6d6" stroke-width="2"/></svg></span>
<span class="tx" id="r31_0" style="left:39.3px;letter-spacing:-0.306px"><span class="Tw">System </span></span>
<span class="tx" id="r31_1" style="left:80.5px;letter-spacing:-0.532px"><span class="Tw">(4.0.0.0, b77a5c561934e089)</span></span>
</div>
<div class="row" style="top:546px">
<span class="ex" style="left:5.2px;top:1.200px"><svg width="8" height="12" viewBox="0 0 8 12"><path d="M1.700 1.700l4 4.300-4 4.300z" fill="none" stroke="#e4e4e4" stroke-width="1.150"/></svg></span>
<span class="ic" style="left:16px;top:0px"><svg width="22" height="17" viewBox="0 0 22 17" style="overflow:visible"><path d="M6.100 1.600h8.500v7.300" fill="none" stroke="#d6d6d6" stroke-width="1"/><path d="M4 3.600h8.600v7.300" fill="none" stroke="#d6d6d6" stroke-width="1"/><rect x="2.900" y="6" width="7.100" height="7" fill="#2a2a2d" stroke="#d6d6d6" stroke-width="2"/></svg></span>
<span class="tx" id="r32_0" style="left:39.3px;letter-spacing:-0.265px"><span class="Tw">System.Core </span></span>
<span class="tx" id="r32_1" style="left:108.8px;letter-spacing:-0.547px"><span class="Tw">(4.0.0.0, b77a5c561934e089)</span></span>
</div>
<div class="row" style="top:563px">
<span class="ex" style="left:5.2px;top:1.200px"><svg width="8" height="12" viewBox="0 0 8 12"><path d="M1.700 1.700l4 4.300-4 4.300z" fill="none" stroke="#e4e4e4" stroke-width="1.150"/></svg></span>
<span class="ic" style="left:16px;top:0px"><svg width="22" height="17" viewBox="0 0 22 17" style="overflow:visible"><path d="M6.100 1.600h8.500v7.300" fill="none" stroke="#d6d6d6" stroke-width="1"/><path d="M4 3.600h8.600v7.300" fill="none" stroke="#d6d6d6" stroke-width="1"/><rect x="2.900" y="6" width="7.100" height="7" fill="#2a2a2d" stroke="#d6d6d6" stroke-width="2"/></svg></span>
<span class="tx" id="r33_0" style="left:39.3px;letter-spacing:-0.218px"><span class="Tw">System.Xaml </span></span>
<span class="tx" id="r33_1" style="left:110.7px;letter-spacing:-0.532px"><span class="Tw">(4.0.0.0, b77a5c561934e089)</span></span>
</div>
<div class="row" style="top:580px">
<span class="ex" style="left:5.2px;top:1.200px"><svg width="8" height="12" viewBox="0 0 8 12"><path d="M1.700 1.700l4 4.300-4 4.300z" fill="none" stroke="#e4e4e4" stroke-width="1.150"/></svg></span>
<span class="ic" style="left:16px;top:0px"><svg width="22" height="17" viewBox="0 0 22 17" style="overflow:visible"><path d="M6.100 1.600h8.500v7.300" fill="none" stroke="#d6d6d6" stroke-width="1"/><path d="M4 3.600h8.600v7.300" fill="none" stroke="#d6d6d6" stroke-width="1"/><rect x="2.900" y="6" width="7.100" height="7" fill="#2a2a2d" stroke="#d6d6d6" stroke-width="2"/></svg></span>
<span class="tx" id="r34_0" style="left:39.3px;letter-spacing:-0.186px"><span class="Tw">System.Xml </span></span>
<span class="tx" id="r34_1" style="left:104.6px;letter-spacing:-0.536px"><span class="Tw">(4.0.0.0, b77a5c561934e089)</span></span>
</div>
<div class="row" style="top:597px">
<span class="ex" style="left:5.2px;top:1.200px"><svg width="8" height="12" viewBox="0 0 8 12"><path d="M1.700 1.700l4 4.300-4 4.300z" fill="none" stroke="#e4e4e4" stroke-width="1.150"/></svg></span>
<span class="ic" style="left:16px;top:0px"><svg width="22" height="17" viewBox="0 0 22 17" style="overflow:visible"><path d="M6.100 1.600h8.500v7.300" fill="none" stroke="#d6d6d6" stroke-width="1"/><path d="M4 3.600h8.600v7.300" fill="none" stroke="#d6d6d6" stroke-width="1"/><rect x="2.900" y="6" width="7.100" height="7" fill="#2a2a2d" stroke="#d6d6d6" stroke-width="2"/></svg></span>
<span class="tx" id="r35_0" style="left:39.3px;letter-spacing:-0.281px"><span class="Tw">WindowsBase </span></span>
<span class="tx" id="r35_1" style="left:115.3px;letter-spacing:-0.463px"><span class="Tw">(4.0.0.0, 31bf3856ad364e35)</span></span>
</div>
<div class="row" style="top:614px">
<span class="ex" style="left:5.2px;top:1.200px"><svg width="8" height="12" viewBox="0 0 8 12"><path d="M1.700 1.700l4 4.300-4 4.300z" fill="none" stroke="#e4e4e4" stroke-width="1.150"/></svg></span>
<span class="ic" style="left:16px;top:0px"><svg width="22" height="17" viewBox="0 0 22 17" style="overflow:visible"><path d="M6.100 1.600h8.500v7.300" fill="none" stroke="#d6d6d6" stroke-width="1"/><path d="M4 3.600h8.600v7.300" fill="none" stroke="#d6d6d6" stroke-width="1"/><rect x="2.900" y="6" width="7.100" height="7" fill="#2a2a2d" stroke="#d6d6d6" stroke-width="2"/></svg></span>
<span class="tx" id="r36_0" style="left:39.3px;letter-spacing:-0.141px"><span class="Tw">System.Numerics </span></span>
<span class="tx" id="r36_1" style="left:134.4px;letter-spacing:-0.532px"><span class="Tw">(4.0.0.0, b77a5c561934e089)</span></span>
</div>
<div class="row" style="top:631px">
<span class="ex" style="left:5.2px;top:1.200px"><svg width="8" height="12" viewBox="0 0 8 12"><path d="M1.700 1.700l4 4.300-4 4.300z" fill="none" stroke="#e4e4e4" stroke-width="1.150"/></svg></span>
<span class="ic" style="left:16px;top:0px"><svg width="22" height="17" viewBox="0 0 22 17" style="overflow:visible"><path d="M6.100 1.600h8.500v7.300" fill="none" stroke="#d6d6d6" stroke-width="1"/><path d="M4 3.600h8.600v7.300" fill="none" stroke="#d6d6d6" stroke-width="1"/><rect x="2.900" y="6" width="7.100" height="7" fill="#2a2a2d" stroke="#d6d6d6" stroke-width="2"/></svg></span>
<span class="tx" id="r37_0" style="left:39.3px;letter-spacing:0.002px"><span class="Tw">System.Configuration </span></span>
<span class="tx" id="r37_1" style="left:157.4px;letter-spacing:-0.338px"><span class="Tw">(4.0.0.0, b03f5f7f11d50a3a)</span></span>
</div>
<div class="row" style="top:648px">
<span class="ex" style="left:5.2px;top:1.200px"><svg width="8" height="12" viewBox="0 0 8 12"><path d="M1.700 1.700l4 4.300-4 4.300z" fill="none" stroke="#e4e4e4" stroke-width="1.150"/></svg></span>
<span class="ic" style="left:16px;top:0px"><svg width="22" height="17" viewBox="0 0 22 17" style="overflow:visible"><path d="M6.100 1.600h8.500v7.300" fill="none" stroke="#d6d6d6" stroke-width="1"/><path d="M4 3.600h8.600v7.300" fill="none" stroke="#d6d6d6" stroke-width="1"/><rect x="2.900" y="6" width="7.100" height="7" fill="#2a2a2d" stroke="#d6d6d6" stroke-width="2"/></svg></span>
<span class="tx" id="r38_0" style="left:39.3px;letter-spacing:0.056px"><span class="Tw">UIAutomationProvider </span></span>
<span class="tx" id="r38_1" style="left:161.2px;letter-spacing:-0.463px"><span class="Tw">(4.0.0.0, 31bf3856ad364e35)</span></span>
</div>
<div class="row" style="top:665px">
<span class="ex" style="left:5.2px;top:1.200px"><svg width="8" height="12" viewBox="0 0 8 12"><path d="M1.700 1.700l4 4.300-4 4.300z" fill="none" stroke="#e4e4e4" stroke-width="1.150"/></svg></span>
<span class="ic" style="left:16px;top:0px"><svg width="22" height="17" viewBox="0 0 22 17" style="overflow:visible"><path d="M6.100 1.600h8.500v7.300" fill="none" stroke="#d6d6d6" stroke-width="1"/><path d="M4 3.600h8.600v7.300" fill="none" stroke="#d6d6d6" stroke-width="1"/><rect x="2.900" y="6" width="7.100" height="7" fill="#2a2a2d" stroke="#d6d6d6" stroke-width="2"/></svg></span>
<span class="tx" id="r39_0" style="left:39.3px;letter-spacing:-0.059px"><span class="Tw">UIAutomationTypes </span></span>
<span class="tx" id="r39_1" style="left:146.3px;letter-spacing:-0.463px"><span class="Tw">(4.0.0.0, 31bf3856ad364e35)</span></span>
</div>
<div class="row" style="top:682px">
<span class="ex" style="left:5.2px;top:1.200px"><svg width="8" height="12" viewBox="0 0 8 12"><path d="M1.700 1.700l4 4.300-4 4.300z" fill="none" stroke="#e4e4e4" stroke-width="1.150"/></svg></span>
<span class="ic" style="left:16px;top:0px"><svg width="22" height="17" viewBox="0 0 22 17" style="overflow:visible"><path d="M6.100 1.600h8.500v7.300" fill="none" stroke="#d6d6d6" stroke-width="1"/><path d="M4 3.600h8.600v7.300" fill="none" stroke="#d6d6d6" stroke-width="1"/><rect x="2.900" y="6" width="7.100" height="7" fill="#2a2a2d" stroke="#d6d6d6" stroke-width="2"/></svg></span>
<span class="tx" id="r40_0" style="left:39.3px;letter-spacing:-0.269px"><span class="Tw">ReachFramework </span></span>
<span class="tx" id="r40_1" style="left:133.3px;letter-spacing:-0.463px"><span class="Tw">(4.0.0.0, 31bf3856ad364e35)</span></span>
</div>
<div class="row" style="top:699px">
<span class="ex" style="left:5.2px;top:1.200px"><svg width="8" height="12" viewBox="0 0 8 12"><path d="M1.700 1.700l4 4.300-4 4.300z" fill="none" stroke="#e4e4e4" stroke-width="1.150"/></svg></span>
<span class="ic" style="left:16px;top:0px"><svg width="22" height="17" viewBox="0 0 22 17" style="overflow:visible"><path d="M6.100 1.600h8.500v7.300" fill="none" stroke="#d6d6d6" stroke-width="1"/><path d="M4 3.600h8.600v7.300" fill="none" stroke="#d6d6d6" stroke-width="1"/><rect x="2.900" y="6" width="7.100" height="7" fill="#2a2a2d" stroke="#d6d6d6" stroke-width="2"/></svg></span>
<span class="tx" id="r41_0" style="left:39.3px;letter-spacing:-0.168px"><span class="Tw">PresentationUI </span></span>
<span class="tx" id="r41_1" style="left:119.5px;letter-spacing:-0.478px"><span class="Tw">(4.0.0.0, 31bf3856ad364e35)</span></span>
</div>
<div class="row" style="top:716px">
<span class="ex" style="left:5.2px;top:1.200px"><svg width="8" height="12" viewBox="0 0 8 12"><path d="M1.700 1.700l4 4.300-4 4.300z" fill="none" stroke="#e4e4e4" stroke-width="1.150"/></svg></span>
<span class="ic" style="left:16px;top:0px"><svg width="22" height="17" viewBox="0 0 22 17" style="overflow:visible"><path d="M6.100 1.600h8.500v7.300" fill="none" stroke="#d6d6d6" stroke-width="1"/><path d="M4 3.600h8.600v7.300" fill="none" stroke="#d6d6d6" stroke-width="1"/><rect x="2.900" y="6" width="7.100" height="7" fill="#2a2a2d" stroke="#d6d6d6" stroke-width="2"/></svg></span>
<span class="tx" id="r42_0" style="left:39.3px;letter-spacing:-0.092px"><span class="Tw">System.Printing </span></span>
<span class="tx" id="r42_1" style="left:125.2px;letter-spacing:-0.463px"><span class="Tw">(4.0.0.0, 31bf3856ad364e35)</span></span>
</div>
<div class="row" style="top:733px">
<span class="ex" style="left:5.2px;top:1.200px"><svg width="8" height="12" viewBox="0 0 8 12"><path d="M1.700 1.700l4 4.300-4 4.300z" fill="none" stroke="#e4e4e4" stroke-width="1.150"/></svg></span>
<span class="ic" style="left:16px;top:0px"><svg width="22" height="17" viewBox="0 0 22 17" style="overflow:visible"><path d="M6.100 1.600h8.500v7.300" fill="none" stroke="#d6d6d6" stroke-width="1"/><path d="M4 3.600h8.600v7.300" fill="none" stroke="#d6d6d6" stroke-width="1"/><rect x="2.900" y="6" width="7.100" height="7" fill="#2a2a2d" stroke="#d6d6d6" stroke-width="2"/></svg></span>
<span class="tx" id="r43_0" style="left:39.3px;letter-spacing:-0.027px"><span class="Tw">Accessibility </span></span>
<span class="tx" id="r43_1" style="left:107.6px;letter-spacing:-0.338px"><span class="Tw">(4.0.0.0, b03f5f7f11d50a3a)</span></span>
</div>
<div class="row" style="top:750px">
<span class="ex" style="left:5.2px;top:1.200px"><svg width="8" height="12" viewBox="0 0 8 12"><path d="M1.700 1.700l4 4.300-4 4.300z" fill="none" stroke="#e4e4e4" stroke-width="1.150"/></svg></span>
<span class="ic" style="left:16px;top:0px"><svg width="22" height="17" viewBox="0 0 22 17" style="overflow:visible"><path d="M6.100 1.600h8.500v7.300" fill="none" stroke="#d6d6d6" stroke-width="1"/><path d="M4 3.600h8.600v7.300" fill="none" stroke="#d6d6d6" stroke-width="1"/><rect x="2.900" y="6" width="7.100" height="7" fill="#2a2a2d" stroke="#d6d6d6" stroke-width="2"/></svg></span>
<span class="tx" id="r44_0" style="left:39.3px;letter-spacing:-0.101px"><span class="Tw">System.Deployment </span></span>
<span class="tx" id="r44_1" style="left:148.2px;letter-spacing:-0.323px"><span class="Tw">(4.0.0.0, b03f5f7f11d50a3a)</span></span>
</div>
<div class="row" style="top:767px">
<span class="ex" style="left:2.0px;top:2.000px"><svg width="8" height="8" viewBox="0 0 8 8"><path d="M7.600 .3v7.300h-7.300z" fill="#f4f4f4"/></svg></span>
<span class="ic" style="left:16px;top:0px"><svg width="22" height="17" viewBox="0 0 22 17" style="overflow:visible"><path d="M6.100 1.600h8.500v7.300" fill="none" stroke="#d6d6d6" stroke-width="1"/><path d="M4 3.600h8.600v7.300" fill="none" stroke="#d6d6d6" stroke-width="1"/><rect x="2.900" y="6" width="7.100" height="7" fill="#2a2a2d" stroke="#d6d6d6" stroke-width="2"/></svg></span>
<span class="tx" id="r45_0" style="left:39.3px;letter-spacing:-0.161px"><span class="Tw">PresentationCore </span></span>
<span class="tx" id="r45_1" style="left:133.3px;letter-spacing:-0.463px"><span class="Tw">(4.0.0.0, 31bf3856ad364e35)</span></span>
</div>
<div class="row" style="top:784px">
<span class="ex" style="left:24.2px;top:1.200px"><svg width="8" height="12" viewBox="0 0 8 12"><path d="M1.700 1.700l4 4.300-4 4.300z" fill="none" stroke="#e4e4e4" stroke-width="1.150"/></svg></span>
<span class="ic" style="left:35px;top:0px"><svg width="22" height="17" viewBox="0 0 22 17" style="overflow:visible"><rect x="1" y="3" width="4.400" height="3.800" fill="#b888e0"/><rect x="7" y="3" width="4.100" height="3.800" fill="#b888e0"/><rect x="1" y="8" width="10.100" height="4" fill="#b888e0"/></svg></span>
<span class="tx" id="r46_0" style="left:58.3px;letter-spacing:-0.122px"><span class="Tmod">PresentationCore.dll</span></span>
</div>
<div class="row" style="top:801px">
<span class="ex" style="left:5.2px;top:1.200px"><svg width="8" height="12" viewBox="0 0 8 12"><path d="M1.700 1.700l4 4.300-4 4.300z" fill="none" stroke="#e4e4e4" stroke-width="1.150"/></svg></span>
<span class="ic" style="left:16px;top:0px"><svg width="22" height="17" viewBox="0 0 22 17" style="overflow:visible"><path d="M6.100 1.600h8.500v7.300" fill="none" stroke="#d6d6d6" stroke-width="1"/><path d="M4 3.600h8.600v7.300" fill="none" stroke="#d6d6d6" stroke-width="1"/><rect x="2.900" y="6" width="7.100" height="7" fill="#2a2a2d" stroke="#d6d6d6" stroke-width="2"/></svg></span>
<span class="tx" id="r47_0" style="left:39.3px;letter-spacing:0.018px"><span class="Tw">System.Windows.Input.Manipulations </span></span>
<span class="tx" id="r47_1" style="left:242.7px;letter-spacing:-0.547px"><span class="Tw">(4.0.0.0, b77a5c561934e089)</span></span>
</div>
<div class="row" style="top:818px">
<span class="ex" style="left:5.2px;top:1.200px"><svg width="8" height="12" viewBox="0 0 8 12"><path d="M1.700 1.700l4 4.300-4 4.300z" fill="none" stroke="#e4e4e4" stroke-width="1.150"/></svg></span>
<span class="ic" style="left:16px;top:0px"><svg width="22" height="17" viewBox="0 0 22 17" style="overflow:visible"><path d="M6.100 1.600h8.500v7.300" fill="none" stroke="#d6d6d6" stroke-width="1"/><path d="M4 3.600h8.600v7.300" fill="none" stroke="#d6d6d6" stroke-width="1"/><rect x="2.900" y="6" width="7.100" height="7" fill="#2a2a2d" stroke="#d6d6d6" stroke-width="2"/></svg></span>
<span class="tx" id="r48_0" style="left:39.3px;letter-spacing:-0.258px"><span class="Tw">System.Security </span></span>
<span class="tx" id="r48_1" style="left:125.2px;letter-spacing:-0.338px"><span class="Tw">(4.0.0.0, b03f5f7f11d50a3a)</span></span>
</div>
<div class="row" style="top:835px">
<span class="ex" style="left:5.2px;top:1.200px"><svg width="8" height="12" viewBox="0 0 8 12"><path d="M1.700 1.700l4 4.300-4 4.300z" fill="none" stroke="#e4e4e4" stroke-width="1.150"/></svg></span>
<span class="ic" style="left:16px;top:0px"><svg width="22" height="17" viewBox="0 0 22 17" style="overflow:visible"><path d="M6.100 1.600h8.500v7.300" fill="none" stroke="#d6d6d6" stroke-width="1"/><path d="M4 3.600h8.600v7.300" fill="none" stroke="#d6d6d6" stroke-width="1"/><rect x="2.900" y="6" width="7.100" height="7" fill="#2a2a2d" stroke="#d6d6d6" stroke-width="2"/></svg></span>
<span class="tx" id="r49_0" style="left:39.3px;letter-spacing:-0.193px"><span class="Tw">System.Drawing </span></span>
<span class="tx" id="r49_1" style="left:127.1px;letter-spacing:-0.338px"><span class="Tw">(4.0.0.0, b03f5f7f11d50a3a)</span></span>
</div>
<div class="row" style="top:852px">
<span class="ex" style="left:5.2px;top:1.200px"><svg width="8" height="12" viewBox="0 0 8 12"><path d="M1.700 1.700l4 4.300-4 4.300z" fill="none" stroke="#e4e4e4" stroke-width="1.150"/></svg></span>
<span class="ic" style="left:16px;top:0px"><svg width="22" height="17" viewBox="0 0 22 17" style="overflow:visible"><path d="M6.100 1.600h8.500v7.300" fill="none" stroke="#d6d6d6" stroke-width="1"/><path d="M4 3.600h8.600v7.300" fill="none" stroke="#d6d6d6" stroke-width="1"/><rect x="2.900" y="6" width="7.100" height="7" fill="#2a2a2d" stroke="#d6d6d6" stroke-width="2"/></svg></span>
<span class="tx" id="r50_0" style="left:39.3px;letter-spacing:-0.171px"><span class="Tw">System.Windows.Forms </span></span>
<span class="tx" id="r50_1" style="left:168.4px;letter-spacing:-0.532px"><span class="Tw">(4.0.0.0, b77a5c561934e089)</span></span>
</div>
</div>
<div id="vsb" class="abs"><div class="th"></div>
<svg class="abs" style="left:4px;top:6px" width="9" height="5" viewBox="0 0 9 5"><path d="M0 5h9l-4.500-5z" fill="#999"/></svg>
<svg class="abs" style="left:4px;top:869px" width="9" height="5" viewBox="0 0 9 5"><path d="M0 0h9l-4.500 5z" fill="#999"/></svg>
</div>
<div id="tab" class="abs"><div class="tt">CheckLicenseKey() : void</div>
<svg class="abs" style="left:144px;top:7px" width="9" height="8" viewBox="0 0 9 8"><path d="M.5 .5l8 7M8.500 .5l-8 7" stroke="#76837a" stroke-width="1.700"/></svg></div>
<div id="tabline" class="abs"></div>
<div id="ed" class="abs"><div id="gut" class="abs"></div><div id="cur" class="abs"></div>
<div class="g" style="left:60px;top:50.0px;height:804.9px;background:repeating-linear-gradient(to bottom,#1d4568 0,#1d4568 2.400px,transparent 2.400px,transparent 4.800px)"></div>
<div class="g" style="left:83px;top:305.1px;height:13.0px;background:repeating-linear-gradient(to bottom,#853852 0,#853852 2.400px,transparent 2.400px,transparent 4.800px)"></div>
<div class="g" style="left:83px;top:353.1px;height:26.9px;background:repeating-linear-gradient(to bottom,#853852 0,#853852 2.400px,transparent 2.400px,transparent 4.800px)"></div>
<div class="g" style="left:83px;top:415.0px;height:26.5px;background:repeating-linear-gradient(to bottom,#853852 0,#853852 2.400px,transparent 2.400px,transparent 4.800px)"></div>
<div class="g" style="left:83px;top:477.1px;height:26.0px;background:repeating-linear-gradient(to bottom,#29541c 0,#29541c 2.400px,transparent 2.400px,transparent 4.800px)"></div>
<div class="g" style="left:83px;top:538.0px;height:26.7px;background:repeating-linear-gradient(to bottom,#29541c 0,#29541c 2.400px,transparent 2.400px,transparent 4.800px)"></div>
<div class="g" style="left:83px;top:612.9px;height:27.0px;background:repeating-linear-gradient(to bottom,#29541c 0,#29541c 2.400px,transparent 2.400px,transparent 4.800px)"></div>
<div class="g" style="left:83px;top:729.1px;height:26.8px;background:repeating-linear-gradient(to bottom,#29541c 0,#29541c 2.400px,transparent 2.400px,transparent 4.800px)"></div>
<div class="g" style="left:83px;top:805.0px;height:26.1px;background:repeating-linear-gradient(to bottom,#29541c 0,#29541c 2.400px,transparent 2.400px,transparent 4.800px)"></div>
<div class="ln" style="top:0.9px">1</div>
<div class="cl" id="c0" style="top:0.9px"><span class="Cc">// CrackMe.MainWindow</span></div>
<div class="ln" style="top:14.2px">2</div>
<div class="cl" id="c1" style="top:14.2px"><span class="Cc">// Token: 0x06000006 RID: 6 RVA: 0x000020B4 File Offset: 0x000002B4</span></div>
<div class="ln" style="top:28.0px">3</div>
<div class="cl" id="c2" style="top:28.0px"><span class="Ck">private</span> <span class="Ck">void</span> <span class="Cm">CheckLicenseKey</span>()</div>
<div class="ln" style="top:39.0px">4</div>
<div class="cl" id="c3" style="top:39.0px">{</div>
<div class="ln" style="top:52.2px">5</div>
<div class="cl" id="c4" style="top:52.2px">    <span class="Ck">string</span> text = <span class="Cs">"SAN"</span>;</div>
<div class="ln" style="top:66.1px">6</div>
<div class="cl" id="c5" style="top:66.1px">    <span class="Ck">char</span>[] array = <span class="Ck">new</span> <span class="Ck">char</span>[text.<span class="Cip">Length</span>];</div>
<div class="ln" style="top:78.9px">7</div>
<div class="cl" id="c6" style="top:78.9px">    array[<span class="Cn">2</span>] = text[<span class="Cn">1</span>];</div>
<div class="ln" style="top:93.0px">8</div>
<div class="cl" id="c7" style="top:93.0px">    array[<span class="Cn">0</span>] = text[<span class="Cn">2</span>];</div>
<div class="ln" style="top:105.8px">9</div>
<div class="cl" id="c8" style="top:105.8px">    array[<span class="Cn">1</span>] = text[<span class="Cn">0</span>];</div>
<div class="ln" style="top:119.9px">10</div>
<div class="cl" id="c9" style="top:119.9px">    <span class="Ck">string</span> text2 = <span class="Cs">"LOBEEEIVS"</span>;</div>
<div class="ln" style="top:134.2px">11</div>
<div class="cl" id="c10" style="top:134.2px">    <span class="Ck">char</span>[] array2 = <span class="Ck">new</span> <span class="Ck">char</span>[text2.<span class="Cip">Length</span>];</div>
<div class="ln" style="top:147.0px">12</div>
<div class="cl" id="c11" style="top:147.0px">    array2[<span class="Cn">1</span>] = text2[<span class="Cn">0</span>];</div>
<div class="ln" style="top:160.9px">13</div>
<div class="cl" id="c12" style="top:160.9px">    array2[<span class="Cn">8</span>] = text2[<span class="Cn">8</span>];</div>
<div class="ln" style="top:174.1px">14</div>
<div class="cl" id="c13" style="top:174.1px">    array2[<span class="Cn">2</span>] = text2[<span class="Cn">1</span>];</div>
<div class="ln" style="top:188.0px">15</div>
<div class="cl" id="c14" style="top:188.0px">    array2[<span class="Cn">7</span>] = text2[<span class="Cn">3</span>];</div>
<div class="ln" style="top:201.9px">16</div>
<div class="cl" id="c15" style="top:201.9px">    array2[<span class="Cn">0</span>] = text2[<span class="Cn">6</span>];</div>
<div class="ln" style="top:214.9px">17</div>
<div class="cl" id="c16" style="top:214.9px">    array2[<span class="Cn">3</span>] = text2[<span class="Cn">7</span>];</div>
<div class="ln" style="top:229.2px">18</div>
<div class="cl" id="c17" style="top:229.2px">    array2[<span class="Cn">5</span>] = text2[<span class="Cn">2</span>];</div>
<div class="ln" style="top:242.1px">19</div>
<div class="cl" id="c18" style="top:242.1px">    array2[<span class="Cn">4</span>] = text2[<span class="Cn">3</span>];</div>
<div class="ln" style="top:256.0px">20</div>
<div class="cl" id="c19" style="top:256.0px">    array2[<span class="Cn">6</span>] = text2[<span class="Cn">3</span>];</div>
<div class="ln" style="top:270.0px">21</div>
<div class="cl" id="c20" style="top:270.0px">    <span class="Ct">RegistryKey</span> registryKey;</div>
<div class="ln" style="top:282.8px">22</div>
<div class="cl" id="c21" style="top:282.8px">    <span class="Ck">try</span></div>
<div class="ln" style="top:294.1px">23</div>
<div class="cl" id="c22" style="top:294.1px">    {</div>
<div class="ln" style="top:307.3px">24</div>
<div class="cl" id="c23" style="top:307.3px">        registryKey = <span class="Cst">Registry</span>.<span class="Csp">CurrentUser</span>.<span class="Cm">OpenSubKey</span>(<span class="Cs">"SOFTWARE"</span>).<span class="Cm">OpenSubKey</span>(<span class="Ck">new</span> <span class="Ck">string</span>(array));</div>
<div class="ln" style="top:318.1px">25</div>
<div class="cl" id="c24" style="top:318.1px">    }</div>
<div class="ln" style="top:331.0px">26</div>
<div class="cl" id="c25" style="top:331.0px">    <span class="Ck">catch</span> (<span class="Ct">SecurityException</span>)</div>
<div class="ln" style="top:342.1px">27</div>
<div class="cl" id="c26" style="top:342.1px">    {</div>
<div class="ln" style="top:355.4px">28</div>
<div class="cl" id="c27" style="top:355.4px">        <span class="Ck">this</span>.<span class="Cm">InvalidLicense</span>();</div>
<div class="ln" style="top:369.0px">29</div>
<div class="cl" id="c28" style="top:369.0px">        <span class="Ck">return</span>;</div>
<div class="ln" style="top:380.0px">30</div>
<div class="cl" id="c29" style="top:380.0px">    }</div>
<div class="ln" style="top:393.1px">31</div>
<div class="cl" id="c30" style="top:393.1px">    <span class="Ck">catch</span> (<span class="Ct">ObjectDisposedException</span>)</div>
<div class="ln" style="top:404.0px">32</div>
<div class="cl" id="c31" style="top:404.0px">    {</div>
<div class="ln" style="top:417.0px">33</div>
<div class="cl" id="c32" style="top:417.0px">        <span class="Ck">this</span>.<span class="Cm">InvalidLicense</span>();</div>
<div class="ln" style="top:429.8px">34</div>
<div class="cl" id="c33" style="top:429.8px">        <span class="Ck">return</span>;</div>
<div class="ln" style="top:441.5px">35</div>
<div class="cl" id="c34" style="top:441.5px">    }</div>
<div class="ln" style="top:453.8px">36</div>
<div class="cl" id="c35" style="top:453.8px">    <span class="Ck">if</span> (registryKey == <span class="Ck">null</span>)</div>
<div class="ln" style="top:466.1px">37</div>
<div class="cl" id="c36" style="top:466.1px">    {</div>
<div class="ln" style="top:478.0px">38</div>
<div class="cl" id="c37" style="top:478.0px">        <span class="Ck">this</span>.<span class="Cm">InvalidLicense</span>();</div>
<div class="ln" style="top:491.9px">39</div>
<div class="cl" id="c38" style="top:491.9px">        <span class="Ck">return</span>;</div>
<div class="ln" style="top:503.1px">40</div>
<div class="cl" id="c39" style="top:503.1px">    }</div>
<div class="ln" style="top:516.0px">41</div>
<div class="cl" id="c40" style="top:516.0px">    <span class="Ck">if</span> (registryKey.<span class="Cm">GetValueKind</span>(<span class="Ck">new</span> <span class="Ck">string</span>(array2)) != <span class="Ce">RegistryValueKind</span>.<span class="Cef">DWord</span>)</div>
<div class="ln" style="top:527.0px">42</div>
<div class="cl" id="c41" style="top:527.0px">    {</div>
<div class="ln" style="top:540.1px">43</div>
<div class="cl" id="c42" style="top:540.1px">        <span class="Ck">this</span>.<span class="Cm">InvalidLicense</span>();</div>
<div class="ln" style="top:553.6px">44</div>
<div class="cl" id="c43" style="top:553.6px">        <span class="Ck">return</span>;</div>
<div class="ln" style="top:564.7px">45</div>
<div class="cl" id="c44" style="top:564.7px">    }</div>
<div class="ln" style="top:578.0px">46</div>
<div class="cl" id="c45" style="top:578.0px">    <span class="Ck">int</span> num = (<span class="Ck">int</span>)registryKey.<span class="Cm">GetValue</span>(<span class="Ck">new</span> <span class="Ck">string</span>(array2));</div>
<div class="ln" style="top:590.9px">47</div>
<div class="cl" id="c46" style="top:590.9px">    <span class="Ck">if</span> (num % <span class="Cn">3571</span> != <span class="Cn">0</span> || num % <span class="Cn">2087</span> != <span class="Cn">0</span> || num % <span class="Cn">29</span> != <span class="Cn">0</span> || num &gt; <span class="Cn">415685825</span>)</div>
<div class="ln" style="top:601.9px">48</div>
<div class="cl" id="c47" style="top:601.9px">    {</div>
<div class="ln" style="top:615.0px">49</div>
<div class="cl" id="c48" style="top:615.0px">        <span class="Ck">this</span>.<span class="Cm">InvalidLicense</span>();</div>
<div class="ln" style="top:628.6px">50</div>
<div class="cl" id="c49" style="top:628.6px">        <span class="Ck">return</span>;</div>
<div class="ln" style="top:639.9px">51</div>
<div class="cl" id="c50" style="top:639.9px">    }</div>
<div class="ln" style="top:653.2px">52</div>
<div class="cl" id="c51" style="top:653.2px">    <span class="Cvt">BigInteger</span> value = <span class="Cn">956</span>;</div>
<div class="ln" style="top:666.1px">53</div>
<div class="cl" id="c52" style="top:666.1px">    <span class="Cvt">BigInteger</span> modulus = <span class="Cn">13615801583L</span>;</div>
<div class="ln" style="top:680.1px">54</div>
<div class="cl" id="c53" style="top:680.1px">    <span class="Cvt">BigInteger</span> right = <span class="Cn">2658442515u</span>;</div>
<div class="ln" style="top:693.9px">55</div>
<div class="cl" id="c54" style="top:693.9px">    <span class="Ck">long</span> value2;</div>
<div class="ln" style="top:706.9px">56</div>
<div class="cl" id="c55" style="top:706.9px">    <span class="Ck">if</span> (!<span class="Ck">long</span>.<span class="Cm">TryParse</span>(<span class="Ck">this</span>.<span class="Cf">licenseKey</span>.<span class="Cip">Text</span>, <span class="Ck">out</span> value2))</div>
<div class="ln" style="top:718.1px">57</div>
<div class="cl" id="c56" style="top:718.1px">    {</div>
<div class="ln" style="top:731.1px">58</div>
<div class="cl" id="c57" style="top:731.1px">        <span class="Ck">this</span>.<span class="Cm">InvalidLicense</span>();</div>
<div class="ln" style="top:744.6px">59</div>
<div class="cl" id="c58" style="top:744.6px">        <span class="Ck">return</span>;</div>
<div class="ln" style="top:755.9px">60</div>
<div class="cl" id="c59" style="top:755.9px">    }</div>
<div class="ln" style="top:768.9px">61</div>
<div class="cl" id="c60" style="top:768.9px">    <span class="Cvt">BigInteger</span> exponent = <span class="Ck">new</span> <span class="Cvt">BigInteger</span>(value2);</div>
<div class="ln" style="top:782.1px">62</div>
<div class="cl" id="c61" style="top:782.1px">    <span class="Ck">if</span> (<span class="Cvt">BigInteger</span>.<span class="Cm">ModPow</span>(value, exponent, modulus) != right)</div>
<div class="ln" style="top:794.0px">63</div>
<div class="cl" id="c62" style="top:794.0px">    {</div>
<div class="ln" style="top:806.2px">64</div>
<div class="cl" id="c63" style="top:806.2px">        <span class="Ck">this</span>.<span class="Cm">InvalidLicense</span>();</div>
<div class="ln" style="top:819.8px">65</div>
<div class="cl" id="c64" style="top:819.8px">        <span class="Ck">return</span>;</div>
<div class="ln" style="top:831.1px">66</div>
<div class="cl" id="c65" style="top:831.1px">    }</div>
<div class="ln" style="top:844.0px">67</div>
<div class="cl" id="c66" style="top:844.0px">    <span class="Ck">this</span>.<span class="Cm">StartProgram</span>(num, array2, exponent.<span class="Cm">ToByteArray</span>());</div>
<div class="ln" style="top:854.9px">68</div>
<div class="cl" id="c67" style="top:854.9px">}</div>
<div class="ln" style="top:866.0px">69</div>
</div>
<div id="hsb" class="abs"><div class="abs" style="left:0;top:0;width:46px;height:4px;background:#252526;border:1px solid #4a4a4e;border-bottom:0"></div><div class="abs" style="left:48px;top:0;width:10px;height:4px;background:#1e1e1e;border:1px solid #4a4a4e;border-bottom:0"></div></div>
<div class="wm abs" style="left:0px;width:405px"><span style="left:390px;color:#444852;-webkit-text-stroke-color:#444852;opacity:1">codeby.net</span></div>
<div class="wm abs" style="left:405px;width:24px"><span style="left:-15px;color:#fff;-webkit-text-stroke-color:#fff;opacity:0.17">codeby.net</span></div>
<div class="wm abs" style="left:429px;width:14px"><span style="left:-39px;color:#4e695c;-webkit-text-stroke-color:#4e695c;opacity:1">codeby.net</span></div>
<div class="wm abs" style="left:443px;width:810px"><span style="left:-53px;color:#fff;-webkit-text-stroke-color:#fff;opacity:0.17">codeby.net</span></div>
</body></html>
